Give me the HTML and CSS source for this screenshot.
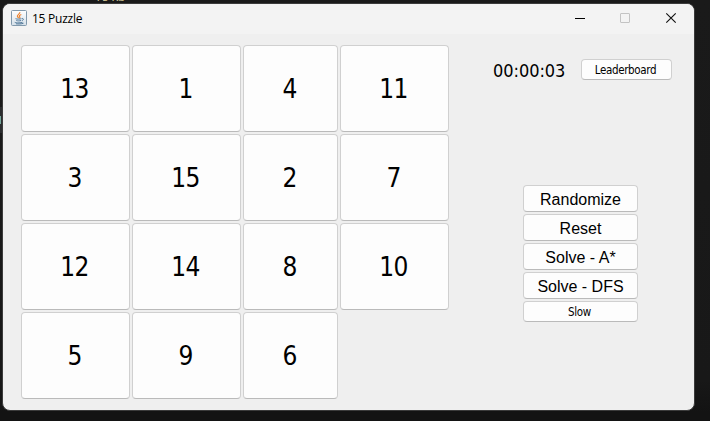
FILE: index.html
```html
<!DOCTYPE html>
<html lang="en">
<head>
<meta charset="utf-8">
<title>15 Puzzle</title>
<link rel="stylesheet" href="styles.css">
</head>
<body>
<div class="behind-top">75 Kb</div>
<div class="behind-left"></div>
<main class="window">
  <header class="titlebar">
    <svg class="java" width="16" height="16" viewBox="0 0 16 16">
      <defs><linearGradient id="g" x1="0" y1="0" x2="0" y2="1"><stop offset="0" stop-color="#fff"/><stop offset="1" stop-color="#d5e0e9"/></linearGradient></defs>
      <rect x=".5" y=".5" width="15" height="15" rx="1" fill="url(#g)" stroke="#8199ac"/>
      <path d="M8.8 2.2c.5 1.7-3 2.6-2.4 4.1.2.7 1 1.2 1.2 1.8M10.3 4.5c-1.8.8-2.6 1.4-1.6 2.4.4.5.2 1-.4 1.4" fill="none" stroke="#ee8430" stroke-width="1.2"/>
      <path d="M4.5 8.7c1.5.6 4.3.5 6 0M5.3 10.5c1.4.5 3.3.5 4.7 0M11 8.6c2-.5 1.8 1.7-.2 2M4 12.1c-1 .8 5.7 1.2 7.5.2M5 13.8c2.5.3 5.5.2 7.5-.6" fill="none" stroke="#557b9b"/>
    </svg>
    <span class="title">15 Puzzle</span>
    <svg class="controls" width="103" height="12" viewBox="0 0 103 12">
      <path d="M0 6.5h10" stroke="#000"/>
      <rect x="45.5" y="1.5" width="9" height="9" rx=".5" fill="none" stroke="#c3c3c3"/>
      <path d="M91.3 1.3l9.4 9.4M100.7 1.3l-9.4 9.4" stroke="#111" stroke-width="1.15"/>
    </svg>
  </header>
  <div class="content">
    <section class="board">
      <button>13</button><button>1</button><button>4</button><button>11</button>
      <button>3</button><button>15</button><button>2</button><button>7</button>
      <button>12</button><button>14</button><button>8</button><button>10</button>
      <button>5</button><button>9</button><button>6</button>
    </section>
    <aside class="side">
      <div class="status">
        <span class="timer">00:00:03</span>
        <button class="small leader">Leaderboard</button>
      </div>
      <div class="actions">
        <button>Randomize</button>
        <button>Reset</button>
        <button>Solve - A*</button>
        <button>Solve - DFS</button>
        <button class="small">Slow</button>
      </div>
    </aside>
  </div>
</main>
</body>
</html>
```
FILE: styles.css
```css
* { box-sizing: border-box; }
body {
  margin: 0;
  width: 710px;
  height: 421px;
  padding: 3px 0 0 2px;
  overflow: hidden;
  position: relative;
  background: linear-gradient(#1a1a1a 0, #181818 380px, #131313 412px);
  font-family: "DejaVu Sans Condensed", "DejaVu Sans", sans-serif;
}
.behind-top {
  position: absolute;
  left: 96px;
  top: -9px;
  font: 11px/12px "Noto Sans", sans-serif;
  color: #d2c798;
}
.behind-left {
  position: absolute;
  left: 0;
  top: 107px;
  width: 3px;
  height: 26px;
  background: #2b2c2e;
}
.behind-left::after {
  content: "";
  position: absolute;
  left: 0;
  top: 9px;
  width: 1px;
  height: 8px;
  background: #75a69a;
}
.window {
  position: relative;
  width: 693px;
  height: 408px;
  border: 1px solid #3b3b3b;
  border-radius: 8px;
  overflow: hidden;
  background: #efefef;
}
.titlebar {
  height: 30px;
  display: flex;
  align-items: center;
  padding: 0 16px 2px 8px;
  background: #f3f3f3;
}
.title {
  position: relative;
  top: 1px;
  margin-left: 5px;
  font: 12px/16px "Open Sans", sans-serif;
  letter-spacing: -0.25px;
  color: #000;
}
.controls { margin-left: auto; }
.content {
  display: flex;
  padding: 11px 0 0 18px;
}
.board {
  display: grid;
  grid-template-columns: 109px 109px 95px 109px;
  grid-template-rows: repeat(4, 87px);
  gap: 2px;
}
button {
  margin: 0;
  padding: 0;
  border: 1px solid #d0d0d0;
  border-bottom-color: #bababa;
  border-radius: 4px;
  background: #fdfdfd;
  color: #000;
  font-family: inherit;
}
.board button {
  padding-right: 2px;
  font-size: 26px;
  letter-spacing: -0.7px;
}
.side {
  flex: 1;
  padding: 14px 0 0 44px;
}
.status {
  display: flex;
  height: 21px;
}
.timer {
  width: 88px;
  font-size: 18px;
  line-height: 23px;
  letter-spacing: -0.05px;
}
.small { height: 21px; }
.leader {
  width: 91px;
  padding-right: 2px;
  font-size: 11.5px;
  letter-spacing: -0.35px;
}
.actions {
  display: grid;
  width: 115px;
  grid-template-rows: repeat(4, 27px) 21px;
  row-gap: 2px;
  margin: 105px 0 0 30px;
}
.actions button {
  padding-top: 2px;
  font-family: "Liberation Sans", sans-serif;
  font-size: 16px;
}
.actions .small {
  padding: 0 2px 0 0;
  font-family: "DejaVu Sans Condensed", sans-serif;
  font-size: 11.5px;
  letter-spacing: -0.35px;
}
```
